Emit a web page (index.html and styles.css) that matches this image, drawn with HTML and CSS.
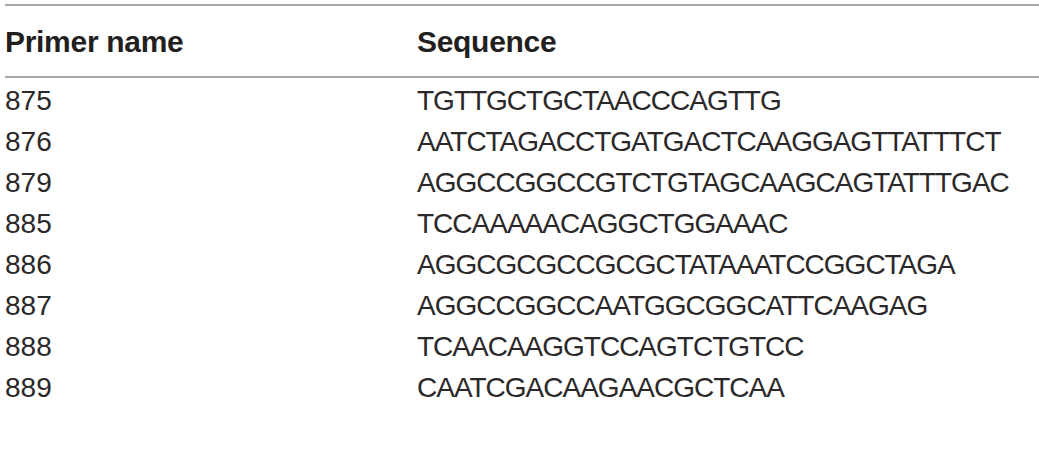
FILE: index.html
```html
<!DOCTYPE html>
<html lang="en">
<head>
<meta charset="utf-8">
<title>Primer sequences</title>
<link rel="stylesheet" href="styles.css">
</head>
<body>
<div class="wrap">
<table class="primers">
  <thead>
    <tr><th class="c1">Primer name</th><th class="c2">Sequence</th></tr>
  </thead>
  <tbody>
    <tr class="first"><td>875</td><td class="seq">TGTTGCTGCTAACCCAGTTG</td></tr>
    <tr><td>876</td><td class="seq">AATCTAGACCTGATGACTCAAGGAGTTATTTCT</td></tr>
    <tr><td>879</td><td class="seq">AGGCCGGCCGTCTGTAGCAAGCAGTATTTGAC</td></tr>
    <tr><td>885</td><td class="seq">TCCAAAAACAGGCTGGAAAC</td></tr>
    <tr><td>886</td><td class="seq">AGGCGCGCCGCGCTATAAATCCGGCTAGA</td></tr>
    <tr><td>887</td><td class="seq">AGGCCGGCCAATGGCGGCATTCAAGAG</td></tr>
    <tr><td>888</td><td class="seq">TCAACAAGGTCCAGTCTGTCC</td></tr>
    <tr><td>889</td><td class="seq">CAATCGACAAGAACGCTCAA</td></tr>
  </tbody>
</table>
</div>
</body>
</html>
```

FILE: styles.css
```css
html, body {
  margin: 0;
  padding: 0;
  background: #ffffff;
}
.wrap {
  padding: 4px 0 0 5px;
}
.primers {
  width: 100%;
  border-collapse: collapse;
  font-family: "Liberation Sans", Arial, Helvetica, sans-serif;
  color: #231f20;
}
.primers thead tr {
  border-top: 2px solid #a8a8a8;
  border-bottom: 2px solid #a8a8a8;
}
.primers th {
  text-align: left;
  font-weight: bold;
  font-size: 30px;
  letter-spacing: -0.3px;
  height: 68px;
  padding: 2px 0 0 0;
  vertical-align: middle;
}
.primers th.c1 {
  width: 412px;
}
.primers td {
  font-size: 28px;
  height: 41px;
  padding: 0;
  vertical-align: middle;
  line-height: 41px;
  color: #2b2829;
}
.primers td.seq {
  letter-spacing: -1px;
}
.primers tr.first td {
  padding-top: 2px;
}
```
